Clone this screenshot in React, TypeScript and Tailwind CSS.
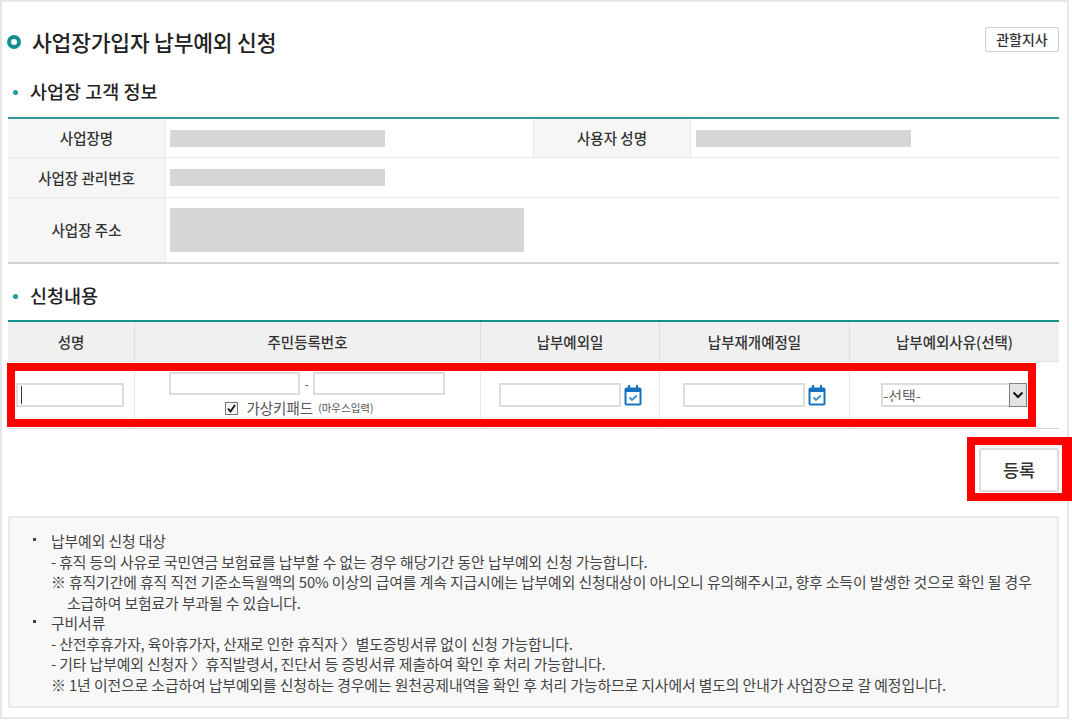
// 사업장가입자 납부예외 신청 화면
const FONT = "font-['Noto_Sans_CJK_KR','Noto_Sans',sans-serif]"

function Redacted({ className = '' }: { className?: string }) {
  return <div className={`bg-[#d6d6d6] ${className}`} />
}

function SectionTitle({ children, className = '' }: { children: string; className?: string }) {
  return (
    <div className={`flex h-6 items-center ${className}`}>
      <span className="ml-[5px] mr-[12px] size-[5px] rounded-full bg-[#1f9c97]" />
      <h3 className="text-[18.5px] font-medium text-[#222]">{children}</h3>
    </div>
  )
}

function InfoHead({ children }: { children: string }) {
  return (
    <div className="flex items-center justify-center border-r border-[#e8e8e8] bg-[#f6f6f6] text-[14.5px] font-medium text-[#333]">
      {children}
    </div>
  )
}

function CalendarIcon() {
  return (
    <svg width="18" height="21" viewBox="0 0 18 21" className="shrink-0">
      <rect x="0.5" y="2.5" width="17" height="18" rx="2" fill="#1573bd" />
      <rect x="4" y="0" width="2" height="4" fill="#1573bd" />
      <rect x="12" y="0" width="2" height="4" fill="#1573bd" />
      <rect x="2.5" y="7" width="13" height="11.5" fill="#fff" />
      <path d="M5.5 12.5 L8 15 L12.8 10.5" fill="none" stroke="#3b8fd0" strokeWidth="1.8" />
    </svg>
  )
}

function TextBox({ className = '' }: { className?: string }) {
  return <input type="text" className={`border-2 border-[#dcdcdc] bg-white outline-none ${className}`} />
}

function DateField() {
  return (
    <div className="flex items-center justify-center gap-[3px]">
      <TextBox className="h-6 w-[122px]" />
      <CalendarIcon />
    </div>
  )
}

const notes = [
  { text: '납부예외 신청 대상', bullet: true },
  { text: '- 휴직 등의 사유로 국민연금 보험료를 납부할 수 없는 경우 해당기간 동안 납부예외 신청 가능합니다.' },
  { text: '※ 휴직기간에 휴직 직전 기준소득월액의 50% 이상의 급여를 계속 지급시에는 납부예외 신청대상이 아니오니 유의해주시고, 향후 소득이 발생한 것으로 확인 될 경우' },
  { text: '소급하여 보험료가 부과될 수 있습니다.', indent: true },
  { text: '구비서류', bullet: true },
  { text: '- 산전후휴가자, 육아휴가자, 산재로 인한 휴직자 〉별도증빙서류 없이 신청 가능합니다.' },
  { text: '- 기타 납부예외 신청자 〉휴직발령서, 진단서 등 증빙서류 제출하여 확인 후 처리 가능합니다.' },
  { text: '※ 1년 이전으로 소급하여 납부예외를 신청하는 경우에는 원천공제내역을 확인 후 처리 가능하므로 지사에서 별도의 안내가 사업장으로 갈 예정입니다.' },
]

export default function App() {
  return (
    <div className={`relative h-[720px] w-[1072px] overflow-hidden bg-white ${FONT}`}>
      <div className="h-[719px] w-[1069px] border-2 border-[#e6e6e6] pl-[6px] pr-[8px] pt-[25px]">
        {/* 제목 */}
        <div className="flex h-[25px] items-center justify-between">
          <div className="mt-[5px] flex items-center">
            <span className="ml-[-1px] mr-[11px] size-[14px] rounded-full border-[4px] border-[#14908c]" />
            <h2 className="text-[21.5px] font-medium tracking-[-0.2px] text-[#222]">사업장가입자 납부예외 신청</h2>
          </div>
          <button className="h-[25px] w-[74px] rounded-[2px] border border-[#cfcfcf] bg-white text-[14px] font-medium text-[#333]">
            관할지사
          </button>
        </div>

        {/* 사업장 고객 정보 */}
        <SectionTitle className="mt-[28px]">사업장 고객 정보</SectionTitle>
        <div className="mt-[13px] border-t-2 border-b-2 border-t-[#2f9a96] border-b-[#d4d4d4]">
          <div className="grid h-[39px] grid-cols-[158px_368px_157px_1fr] border-b border-[#e8e8e8]">
            <InfoHead>사업장명</InfoHead>
            <div className="flex items-center border-r border-[#e8e8e8] pl-[4px]">
              <Redacted className="h-[17px] w-[215px]" />
            </div>
            <InfoHead>사용자 성명</InfoHead>
            <div className="flex items-center pl-[5px]">
              <Redacted className="h-[17px] w-[215px]" />
            </div>
          </div>
          <div className="grid h-[40px] grid-cols-[158px_1fr] border-b border-[#e8e8e8]">
            <InfoHead>사업장 관리번호</InfoHead>
            <div className="flex items-center pl-[4px]">
              <Redacted className="h-[17px] w-[215px]" />
            </div>
          </div>
          <div className="grid h-[64px] grid-cols-[158px_1fr]">
            <InfoHead>사업장 주소</InfoHead>
            <div className="flex items-center pl-[4px]">
              <Redacted className="h-[44px] w-[354px]" />
            </div>
          </div>
        </div>

        {/* 신청내용 */}
        <SectionTitle className="mt-[20px]">신청내용</SectionTitle>
        <div className="mt-[12px] border-t-2 border-b border-t-[#14908c] border-b-[#d8d8d8]">
          <div className="grid h-[40px] grid-cols-[127px_346px_179px_190px_1fr] border-b border-[#e4e4e4] bg-[#f0f0f0] text-[14.5px] font-medium text-[#333]">
            <div className="flex items-center justify-center border-r border-[#dddddd]">성명</div>
            <div className="flex items-center justify-center border-r border-[#dddddd]">주민등록번호</div>
            <div className="flex items-center justify-center border-r border-[#dddddd]">납부예외일</div>
            <div className="flex items-center justify-center border-r border-[#dddddd]">납부재개예정일</div>
            <div className="flex items-center justify-center">납부예외사유(선택)</div>
          </div>
          <div className="grid h-[66px] grid-cols-[127px_346px_179px_190px_1fr]">
            <div className="relative flex items-center border-r border-[#e8e8e8] pl-[8px]">
              <TextBox className="h-6 w-[108px]" />
              <span className="absolute left-[13px] top-[24px] h-[18px] w-px bg-[#333]" />
            </div>
            <div className="flex flex-col items-center border-r border-[#e8e8e8] pt-[10px]">
              <div className="mr-[1px] flex items-center gap-[3px] text-[12px] text-[#555]">
                <TextBox className="h-[23px] w-[131px]" />
                <span className="w-[7px] text-center">-</span>
                <TextBox className="h-[23px] w-[132px]" />
              </div>
              <div className="mt-[3px] flex h-[20px] items-center pr-[16px]">
                <span className="mr-[8px] flex size-[13px] items-center justify-center border border-[#777] bg-[#f4f4f4]">
                  <svg width="11" height="11" viewBox="0 0 11 11">
                    <path d="M2 5.5 L4.5 8.5 L9 2" fill="none" stroke="#111" strokeWidth="1.8" />
                  </svg>
                </span>
                <span className="text-[14.5px] text-[#555]">가상키패드</span>
                <span className="ml-[5px] text-[10.5px] text-[#555]">(마우스입력)</span>
              </div>
            </div>
            <div className="flex items-center justify-center border-r border-[#e8e8e8]">
              <DateField />
            </div>
            <div className="flex items-center justify-center border-r border-[#e8e8e8]">
              <DateField />
            </div>
            <div className="flex items-center pl-[31px]">
              <div className="relative h-6 w-[146px]">
                <select className="h-6 w-full appearance-none border-2 border-[#dcdcdc] bg-white pb-[3px] text-[15px] text-[#666] outline-none">
                  <option>-선택-</option>
                </select>
                <span className="absolute right-0 top-0 flex h-6 w-[18px] items-center justify-center border border-[#808080] bg-[#e3e3e3]">
                  <svg width="12" height="8" viewBox="0 0 12 8">
                    <path d="M1.5 1.5 L6 6 L10.5 1.5" fill="none" stroke="#111" strokeWidth="2" />
                  </svg>
                </span>
              </div>
            </div>
          </div>
        </div>

        {/* 등록 */}
        <div className="mt-[19px] flex justify-end">
          <button className="h-[44px] w-[80px] rounded-[3px] border-2 border-[#dcdcdc] bg-white text-[17.5px] font-medium text-[#333]">
            등록
          </button>
        </div>

        {/* 안내 */}
        <div className="mt-[24px] h-[192px] border-2 border-[#e9e9e9] bg-[#f8f8f8] pl-[41px] pt-[13px] text-[14.85px] leading-[20.5px] tracking-[-0.1px] text-[#444]">
          {notes.map((n) => (
            <div key={n.text} className={`relative whitespace-nowrap ${n.indent ? 'pl-[16px]' : ''}`}>
              {n.bullet && <span className="absolute left-[-18px] top-[7px] size-[3px] bg-[#444]" />}
              {n.text}
            </div>
          ))}
        </div>
      </div>

      {/* 강조 표시 */}
      <div className="pointer-events-none absolute left-[7px] top-[363px] h-[64px] w-[1029px] border-[8px] border-[#ff0000]" />
      <div className="pointer-events-none absolute left-[967px] top-[437px] h-[64px] w-[105px] border-y-[8px] border-l-[8px] border-r-[10px] border-[#ff0000]" />
    </div>
  )
}
